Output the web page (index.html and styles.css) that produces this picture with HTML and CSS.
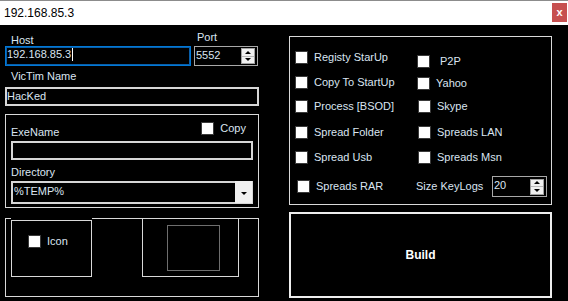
FILE: index.html
```html
<!DOCTYPE html>
<html lang="en">
<head>
  <meta charset="UTF-8">
  <meta name="viewport" content="width=device-width, initial-scale=1.0">
  <title>192.168.85.3</title>
  <link rel="stylesheet" href="styles.css">
</head>
<body>
  <div class="window">
    <div class="titlebar">
      <span class="title">192.168.85.3</span>
      <span class="close">x</span>
    </div>

    <div class="main">
      <!-- connection + file settings -->
      <div class="left">
        <div class="conn">
          <div class="field-host">
            <label class="lbl">Host</label>
            <div class="textbox focused">192.168.85.3<span class="caret"></span></div>
          </div>
          <div class="field-port">
            <label class="lbl lbl-port">Port</label>
            <div class="numeric numeric-port">
              <span class="num-value">5552</span>
              <span class="spin"><span class="up"></span><span class="down"></span></span>
            </div>
          </div>
        </div>

        <label class="lbl lbl-name">VicTim Name</label>
        <div class="textbox">HacKed</div>

        <div class="group group-exe">
          <div class="exe-head">
            <label class="lbl lbl-exe">ExeName</label>
            <div class="cb-item check-copy"><span class="checkbox"></span>Copy</div>
          </div>
          <div class="textbox textbox-exe"></div>
          <label class="lbl lbl-dir">Directory</label>
          <div class="select">
            <span class="select-value">%TEMP%</span>
            <span class="select-btn"><span class="down"></span></span>
          </div>
        </div>

        <div class="group group-icon">
          <div class="icon-wrap">
            <div class="icon-box">
              <div class="cb-item"><span class="checkbox"></span>Icon</div>
            </div>
          </div>
          <div class="preview-frame">
            <div class="preview"></div>
          </div>
        </div>
      </div>

      <!-- options + build -->
      <div class="right">
        <div class="group options">
          <div class="cb-item"><span class="checkbox"></span>Registy StarUp</div>
          <div class="cb-item opt-p2p"><span class="checkbox"></span>P2P</div>
          <div class="cb-item"><span class="checkbox"></span>Copy To StartUp</div>
          <div class="cb-item opt-yahoo"><span class="checkbox"></span>Yahoo</div>
          <div class="cb-item"><span class="checkbox"></span>Process [BSOD]</div>
          <div class="cb-item opt-shift"><span class="checkbox"></span>Skype</div>
          <div class="cb-item"><span class="checkbox"></span>Spread Folder</div>
          <div class="cb-item opt-shift"><span class="checkbox"></span>Spreads LAN</div>
          <div class="cb-item"><span class="checkbox"></span>Spread Usb</div>
          <div class="cb-item opt-shift"><span class="checkbox"></span>Spreads Msn</div>
          <div class="cb-item opt-rar"><span class="checkbox"></span>Spreads RAR</div>
          <div class="keylogs">
            <span class="size-label">Size KeyLogs</span>
            <div class="numeric numeric-logs">
              <span class="num-value">20</span>
              <span class="spin"><span class="up"></span><span class="down"></span></span>
            </div>
          </div>
        </div>

        <div class="build">Build</div>
      </div>
    </div>
  </div>
</body>
</html>
```

FILE: styles.css
```css
* {
  box-sizing: border-box;
}
body {
  margin: 0;
  background: #000;
  font-family: "Liberation Sans", Arial, sans-serif;
  font-size: 11px;
  color: #dbe5f1;
}
.window {
  width: 568px;
  height: 301px;
  overflow: hidden;
}

/* title bar */
.titlebar {
  height: 25px;
  background: #fff;
  border-top: 1px solid #8c8c8c;
  display: flex;
  align-items: flex-start;
}
.title {
  font-size: 12px;
  line-height: 24px;
  color: #000;
  padding-left: 4px;
}
.close {
  margin: 2px 1px 0 auto;
  width: 15px;
  height: 19px;
  background: #c75050;
  color: #fff;
  font-weight: bold;
  font-size: 11px;
  line-height: 18px;
  text-align: center;
}

/* layout */
.main {
  display: flex;
  padding-left: 5px;
}
.left {
  width: 254px;
  padding-top: 9px;
}
.right {
  width: 263px;
  margin-left: 30px;
  padding-top: 11px;
}

/* labels + text boxes */
.lbl {
  display: block;
  line-height: 12px;
  padding-left: 6px;
}
.conn {
  display: flex;
  gap: 3px;
}
.field-host {
  width: 186px;
}
.field-port {
  width: 64px;
}
.lbl-port {
  padding-left: 3px;
  margin-top: -3px;
  margin-bottom: 3px;
}
.lbl-name {
  margin-top: 4px;
  margin-bottom: 5px;
}
.textbox {
  height: 19px;
  border: 2px solid #d6d6d6;
  line-height: 15px;
  color: #dbe5f1;
  white-space: nowrap;
}
.textbox.focused {
  height: 20px;
  border: 1px solid #0078d7;
  box-shadow: inset 0 0 0 1px #0a5ea8;
  padding-left: 1px;
}
.caret {
  display: inline-block;
  width: 1px;
  height: 13px;
  margin-left: 1px;
  background: #fff;
  vertical-align: -3px;
}

/* numeric up/down */
.numeric {
  display: flex;
  align-items: center;
  border: 1px solid #a8a8a8;
  padding: 0 2px 0 1px;
}
.numeric-port {
  height: 20px;
}
.numeric-logs {
  width: 55px;
  height: 21px;
}
.num-value {
  flex: 1;
  line-height: 13px;
  margin-top: -2px;
}
.spin {
  width: 14px;
  height: 16px;
  display: flex;
  flex-direction: column;
  border: 1px solid #a0a0a0;
  background: #f0f0f0;
}
.spin .up,
.spin .down {
  flex: 1;
  display: flex;
  align-items: center;
  justify-content: center;
}
.spin .up {
  border-bottom: 1px solid #b8b8b8;
}
.spin .up::after {
  content: "";
  border-left: 3px solid transparent;
  border-right: 3px solid transparent;
  border-bottom: 3px solid #000;
}
.down::after {
  content: "";
  border-left: 3px solid transparent;
  border-right: 3px solid transparent;
  border-top: 3px solid #000;
}

/* group boxes */
.group {
  border: 1px solid #d9d9d9;
}
.group-exe {
  margin-top: 8px;
  padding: 7px 5px 3px 5px;
}
.exe-head {
  display: flex;
  justify-content: space-between;
  height: 16px;
}
.lbl-exe {
  padding-left: 0;
  align-self: flex-end;
}
.check-copy {
  align-self: flex-start;
  margin-right: 7px;
}
.textbox-exe {
  margin-top: 3px;
}
.lbl-dir {
  padding-left: 0;
  margin-top: 6px;
  margin-bottom: 3px;
}
.select {
  height: 23px;
  display: flex;
  border: 2px solid #d6d6d6;
  border-right-width: 1px;
}
.select-value {
  line-height: 17px;
  padding-left: 1px;
}
.select-btn {
  width: 17px;
  margin: -2px 0 -1px auto;
  background: #f0f0f0;
  display: flex;
  align-items: center;
  justify-content: center;
}
.select-btn .down {
  display: flex;
  padding-top: 2px;
}

.group-icon {
  margin-top: 10px;
  height: 79px;
  display: flex;
  align-items: flex-start;
  padding-left: 5px;
}
.icon-wrap {
  margin-top: -1px;
  padding-top: 2px;
  background: #000;
  width: 81px;
}
.icon-box {
  height: 57px;
  border: 1px solid #d9d9d9;
  padding: 14px 0 0 16px;
}
.preview-frame {
  margin: -1px 0 0 50px;
  width: 97px;
  height: 59px;
  border: 1px solid #d9d9d9;
  background: #000;
}
.preview {
  margin: 6px 0 0 24px;
  width: 53px;
  height: 46px;
  border: 1px solid #6e6e6e;
}

/* check boxes */
.cb-item {
  display: flex;
  align-items: center;
  gap: 6px;
  height: 13px;
  line-height: 13px;
  white-space: nowrap;
}
.checkbox {
  width: 13px;
  height: 13px;
  background: #fff;
  border: 1px solid #3a3a3a;
  flex: none;
}

/* options */
.options {
  height: 169px;
  padding: 14px 0 0 5px;
  display: grid;
  grid-template-columns: 122px 1fr;
  grid-template-rows: 25px 24px 26px 25px 25px 21px;
  align-items: start;
}
.opt-p2p {
  margin-top: 4px;
  gap: 10px;
}
.opt-yahoo {
  margin-top: 1px;
}
.opt-shift {
  margin-left: 1px;
}
.opt-rar {
  margin: 4px 0 0 2px;
}
.keylogs {
  display: flex;
  align-items: center;
  height: 21px;
  margin-left: -1px;
}
.size-label {
  width: 76px;
  line-height: 13px;
}

.build {
  margin-top: 7px;
  height: 86px;
  border: 2px solid #eee;
  display: flex;
  align-items: center;
  justify-content: center;
  font-size: 12px;
  font-weight: bold;
  color: #fff;
}
```
